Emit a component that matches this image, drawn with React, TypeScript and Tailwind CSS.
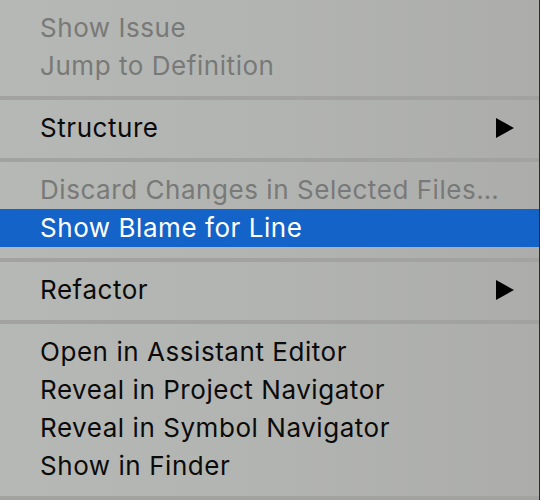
import React from "react";

type Item =
  | { kind: "item"; label: string; disabled?: boolean; selected?: boolean; submenu?: boolean }
  | { kind: "sep" };

const items: Item[] = [
  { kind: "item", label: "Show Issue", disabled: true },
  { kind: "item", label: "Jump to Definition", disabled: true },
  { kind: "sep" },
  { kind: "item", label: "Structure", submenu: true },
  { kind: "sep" },
  { kind: "item", label: "Discard Changes in Selected Files…", disabled: true },
  { kind: "item", label: "Show Blame for Line", selected: true },
  { kind: "sep" },
  { kind: "item", label: "Refactor", submenu: true },
  { kind: "sep" },
  { kind: "item", label: "Open in Assistant Editor" },
  { kind: "item", label: "Reveal in Project Navigator" },
  { kind: "item", label: "Reveal in Symbol Navigator" },
  { kind: "item", label: "Show in Finder" },
  { kind: "sep" },
];

function Triangle() {
  return (
    <svg width="18" height="20" viewBox="0 0 18 20" className="block">
      <polygon points="0,0 18,10 0,20" fill="#000" />
    </svg>
  );
}

export default function App() {
  return (
    <div className="w-[540px] h-[500px] overflow-hidden flex bg-gradient-to-r from-[#b5b8b4] via-[#b2b4b1] to-[#acadab]">
      <div
        className="flex-1 flex flex-col pt-[9px] text-[26px] tracking-[0.55px]"
        style={{ fontFamily: '"Inter", "Roboto", sans-serif' }}
      >
        {items.map((it, i) =>
          it.kind === "sep" ? (
            <div key={i} className="shrink-0 pt-[11px] pb-[9px]">
              <div className="h-[4px] bg-[#a2a3a1]" />
            </div>
          ) : (
            <div
              key={i}
              className={
                "shrink-0 h-[38px] flex items-center pl-[40px] pr-[25px] " +
                (it.selected ? "bg-[#1463c9] text-white" : it.disabled ? "text-[#787978]" : "text-[#0b0b0b]")
              }
            >
              <span className="flex-1 whitespace-nowrap leading-none">{it.label}</span>
              {it.submenu && <Triangle />}
            </div>
          )
        )}
      </div>
      <div className="w-px bg-[#2a2a2a]" />
    </div>
  );
}
